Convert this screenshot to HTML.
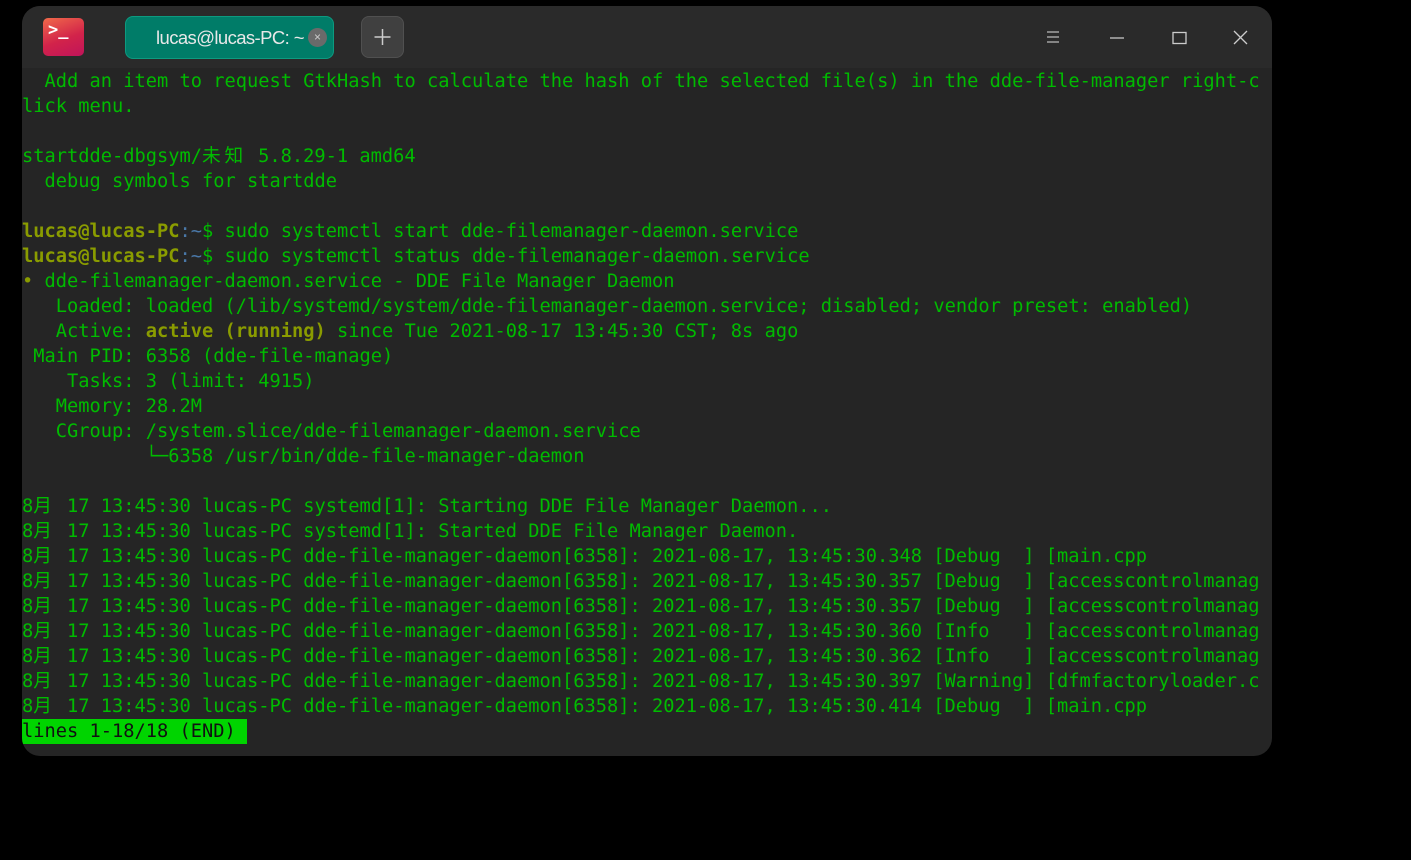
<!DOCTYPE html>
<html><head><meta charset="utf-8"><style>
html,body{margin:0;padding:0;background:#000;width:1411px;height:860px;overflow:hidden}
.win{position:absolute;left:22px;top:6px;width:1250px;height:750px;background:#252525;border-radius:18px;overflow:hidden}
.tb{position:absolute;left:0;top:0;width:1250px;height:62px;background:#2a2a2a}
.logo{position:absolute;left:21px;top:12px;width:41px;height:38px;border-radius:5px;background:linear-gradient(160deg,#f06a4a,#d2234a 55%,#c0145a)}
.logo span{position:absolute;left:5px;top:2px;color:#fff;font:bold 17px "DejaVu Sans Mono",monospace}
.tab{position:absolute;left:103px;top:10px;width:207px;height:41px;border-radius:8px;background:#007c68;border:1px solid #0d9a80;color:#e8e8e8;font:18.5px "Liberation Sans",sans-serif;line-height:41px;text-indent:30px;letter-spacing:-0.6px}
.tab .x{position:absolute;left:182px;top:11px;width:19px;height:19px;border-radius:50%;background:#6a6a6a;color:#ccc;font-size:12px;line-height:19px;text-indent:0;text-align:center;letter-spacing:0}
.plus{position:absolute;left:339px;top:10px;width:41px;height:40px;border-radius:8px;background:#404040;border:1px solid #505050}
.term{position:absolute;left:0;top:63px;font-family:"DejaVu Sans Mono","Noto Sans CJK SC",monospace;font-size:18.7px;line-height:25px;color:#00bb00;white-space:pre}
.c{display:inline-block;width:22.45px;text-align:left}
.p{color:#8a9c00;font-weight:bold}
.b{color:#4a78a8}
.o{color:#8a9c00;font-weight:bold}
.st{background:#00d400;color:#111;display:inline-block;width:225px}
</style></head><body>
<div class="win">
<div class="tb">
<div class="logo"><span>&gt;_</span></div>
<div class="tab">lucas@lucas-PC: ~<div class="x">×</div></div>
<div class="plus"><svg width="41" height="40"><path d="M20.5 12v16M12.5 20h16" stroke="#ccc" stroke-width="1.5"/></svg></div>
<svg style="position:absolute;left:1020px;top:20px" width="230" height="24">
<path d="M5 6h12M5 11h12M5 16h12" stroke="#bbb" stroke-width="1.3"/>
<path d="M68 12h14" stroke="#ccc" stroke-width="1.3"/>
<rect x="131" y="6.5" width="13" height="11" fill="none" stroke="#ccc" stroke-width="1.3"/>
<path d="M192 5l13 13M205 5l-13 13" stroke="#ccc" stroke-width="1.3"/>
</svg>
</div>
<div class="term">  Add an item to request GtkHash to calculate the hash of the selected file(s) in the dde-file-manager right-c
lick menu.

startdde-dbgsym/<span class="c">未</span><span class="c">知</span> 5.8.29-1 amd64
  debug symbols for startdde

<span class="p">lucas@lucas-PC</span><span class="b">:~</span>$ sudo systemctl start dde-filemanager-daemon.service
<span class="p">lucas@lucas-PC</span><span class="b">:~</span>$ sudo systemctl status dde-filemanager-daemon.service
<span style="color:#8a9c00">•</span> dde-filemanager-daemon.service - DDE File Manager Daemon
   Loaded: loaded (/lib/systemd/system/dde-filemanager-daemon.service; disabled; vendor preset: enabled)
   Active: <span class="o">active (running)</span> since Tue 2021-08-17 13:45:30 CST; 8s ago
 Main PID: 6358 (dde-file-manage)
    Tasks: 3 (limit: 4915)
   Memory: 28.2M
   CGroup: /system.slice/dde-filemanager-daemon.service
           └─6358 /usr/bin/dde-file-manager-daemon

8<span class="c">月</span> 17 13:45:30 lucas-PC systemd[1]: Starting DDE File Manager Daemon...
8<span class="c">月</span> 17 13:45:30 lucas-PC systemd[1]: Started DDE File Manager Daemon.
8<span class="c">月</span> 17 13:45:30 lucas-PC dde-file-manager-daemon[6358]: 2021-08-17, 13:45:30.348 [Debug  ] [main.cpp
8<span class="c">月</span> 17 13:45:30 lucas-PC dde-file-manager-daemon[6358]: 2021-08-17, 13:45:30.357 [Debug  ] [accesscontrolmanag
8<span class="c">月</span> 17 13:45:30 lucas-PC dde-file-manager-daemon[6358]: 2021-08-17, 13:45:30.357 [Debug  ] [accesscontrolmanag
8<span class="c">月</span> 17 13:45:30 lucas-PC dde-file-manager-daemon[6358]: 2021-08-17, 13:45:30.360 [Info   ] [accesscontrolmanag
8<span class="c">月</span> 17 13:45:30 lucas-PC dde-file-manager-daemon[6358]: 2021-08-17, 13:45:30.362 [Info   ] [accesscontrolmanag
8<span class="c">月</span> 17 13:45:30 lucas-PC dde-file-manager-daemon[6358]: 2021-08-17, 13:45:30.397 [Warning] [dfmfactoryloader.c
8<span class="c">月</span> 17 13:45:30 lucas-PC dde-file-manager-daemon[6358]: 2021-08-17, 13:45:30.414 [Debug  ] [main.cpp
<span class="st">lines 1-18/18 (END)</span></div>
</div>
</body></html>
